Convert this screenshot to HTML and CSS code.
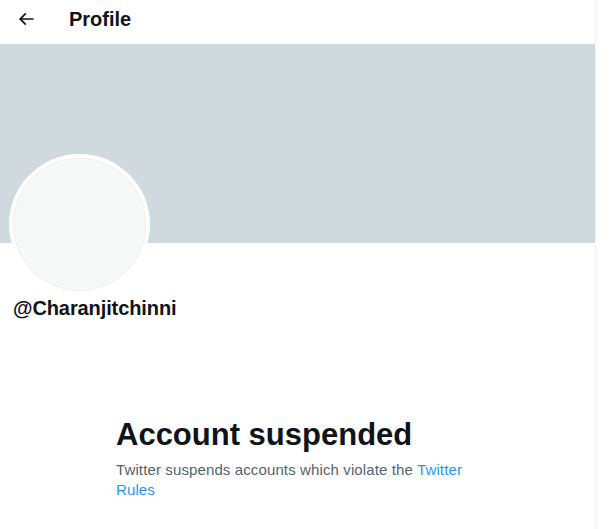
FILE: index.html
```html
<!DOCTYPE html>
<html lang="en">
<head>
<meta charset="utf-8">
<title>Profile</title>
<link rel="stylesheet" href="styles.css">
</head>
<body>
<main class="column">
  <header class="topbar">
    <span class="back" aria-label="Back">
      <svg viewBox="0 0 24 24" width="20" height="20"><path d="M7.414 13l5.043 5.04-1.414 1.42L3.586 12l7.457-7.46 1.414 1.42L7.414 11H21v2H7.414z" fill="#0f1419"/></svg>
    </span>
    <h2 class="title">Profile</h2>
  </header>
  <div class="banner"></div>
  <section class="profile">
    <div class="avatar"><div class="avatar-inner"></div></div>
    <div class="handle">@Charanjitchinni</div>
  </section>
  <section class="empty">
    <h1 class="empty-title">Account suspended</h1>
    <p class="empty-text">Twitter suspends accounts which violate the <a class="link" href="#">Twitter Rules</a></p>
  </section>
</main>
</body>
</html>
```
FILE: styles.css
```css
* { box-sizing: border-box; }
html, body { margin: 0; padding: 0; background: #fff; }
body {
  font-family: "Liberation Sans", Arial, sans-serif;
  color: #0f1419;
}
.column {
  width: 596px;
  min-height: 529px;
  border-right: 1px solid #eff3f4;
  display: flex;
  flex-direction: column;
}
.topbar {
  height: 44px;
  display: flex;
  align-items: center;
  padding: 0 0 7px 16px;
}
.back { width: 20px; height: 20px; display: flex; }
.title {
  margin: 0 0 0 33px;
  font-size: 20px;
  font-weight: 700;
  line-height: 24px;
}
.banner { height: 199px; background: #cfd9de; }
.profile { padding: 0 9px; }
.avatar {
  width: 141px;
  height: 141px;
  margin-top: -89px;
  border-radius: 50%;
  background: #fff;
  padding: 4px;
}
.avatar-inner {
  width: 100%;
  height: 100%;
  border-radius: 50%;
  background: #f7f9f9;
  box-shadow: inset 0 0 0 1px rgba(0,0,0,0.04);
}
.handle {
  margin: 1px 0 0 4px;
  font-size: 20px;
  font-weight: 700;
  line-height: 24px;
  letter-spacing: -0.1px;
}
.empty {
  width: 363px;
  margin: 97px auto 0;
}
.empty-title {
  margin: 0;
  font-size: 31px;
  font-weight: 700;
  line-height: 36px;
}
.empty-text {
  margin: 7px 0 0;
  font-size: 15px;
  line-height: 20px;
  letter-spacing: 0.12px;
  color: #536471;
}
.link { color: #1d9bf0; text-decoration: none; }
```
